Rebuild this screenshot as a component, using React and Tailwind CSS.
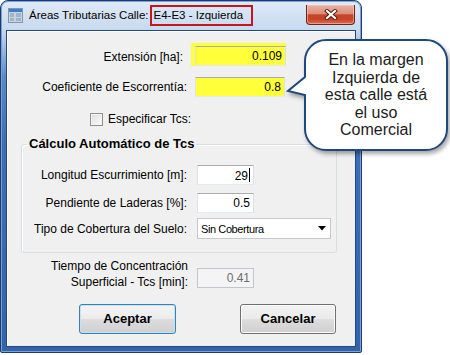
const field =
  'border border-[#abadb3] border-l-[#e2e3ea] border-r-[#dbdfe6] border-b-[#e3e9ef] bg-white h-[20px] text-right pr-[3px] text-[12px] leading-[18px]';

function TitleIcon() {
  return (
    <svg width="15" height="15" viewBox="0 0 15 15" className="shrink-0">
      <rect x="0.5" y="0.5" width="14" height="14" fill="#c9d3df" stroke="#8597ad" />
      <rect x="1" y="1" width="13" height="3" fill="#3d7fc7" />
      <rect x="2" y="5" width="4" height="4" fill="#9fb5cc" />
      <rect x="8" y="5" width="5" height="4" fill="#9fb5cc" />
      <rect x="2" y="10" width="4" height="3" fill="#9fb5cc" />
      <rect x="8" y="10" width="5" height="3" fill="#9fb5cc" />
    </svg>
  );
}

function CloseButton() {
  return (
    <div className="ml-auto mr-[6px] -mt-[1px] flex h-[20px] w-[49px] items-center justify-center rounded-b-[4px] border border-t-0 border-[#6a2418] bg-[linear-gradient(to_bottom,#eab1a2_0%,#dc8f7b_45%,#c7452c_52%,#c54329_75%,#dc6f4b_100%)] shadow-[inset_0_0_0_1px_rgba(255,210,200,0.5)]">
      <svg width="14" height="11" viewBox="0 0 14 11">
        <path d="M3 2 L11 9 M11 2 L3 9" stroke="#4a1a10" strokeWidth="4" strokeLinecap="square" />
        <path d="M3 2 L11 9 M11 2 L3 9" stroke="#ffffff" strokeWidth="2.2" strokeLinecap="square" />
      </svg>
    </div>
  );
}

function Callout() {
  return (
    <>
      <svg
        width="166"
        height="120"
        viewBox="0 0 166 120"
        className="absolute left-[286px] top-[38px] drop-shadow-[2px_3px_2px_rgba(0,0,0,0.35)]"
      >
        <path
          d="M40 2 H140 A21 21 0 0 1 161 23 V91 A21 21 0 0 1 140 112 H40 A21 21 0 0 1 19 91 V57 L2 53 L19 39 V23 A21 21 0 0 1 40 2 Z"
          fill="#ffffff"
          stroke="#1f497d"
          strokeWidth="2"
        />
      </svg>
      <div className="absolute left-[305px] top-[40px] flex h-[110px] w-[142px] flex-col items-center justify-center text-center text-[16px] leading-[17.5px] text-[#1c1c1c]">
        <span>En la margen</span>
        <span>Izquierda de</span>
        <span>esta calle está</span>
        <span>el uso</span>
        <span>Comercial</span>
      </div>
    </>
  );
}

export default function App() {
  return (
    <div
      className="relative h-[355px] w-[450px] overflow-hidden bg-white text-black"
      style={{ fontFamily: '"Liberation Sans", Arial, sans-serif' }}
    >
      <div className="flex h-[353px] w-[362px] flex-col rounded-t-[8px] rounded-b-[2px] border border-[#1d3a6a] bg-[linear-gradient(to_bottom,#dfeaf7_0px,#c8daef_28px,#a9c4e6_42px,#5b8aca_75px,#3e6eb5_140px,#3363aa_100%)] shadow-[inset_0_0_0_1px_#7aa2d8]">
        <div className="flex h-[29px] shrink-0 items-center">
          <div className="ml-[7px]">
            <TitleIcon />
          </div>
          <div className="ml-[6px] whitespace-nowrap text-[11.5px] text-black">
            Áreas Tributarias Calle:
            <span className="ml-[1px] inline-block border-2 border-[#c4161c] pl-[2px] pr-[8px] leading-[17px]">
              E4-E3 - Izquierda
            </span>
          </div>
          <CloseButton />
        </div>

        <div className="mx-[5px] mb-[5px] flex-1 border border-[#24467c] bg-[#f0f0f0] pl-[1px] shadow-[inset_1px_1px_0_#ffffff] text-[12px]">
          {/* Extensión */}
          <div className="mt-[12px] flex items-end">
            <div className="w-[175px] text-right leading-[18px]">Extensión [ha]:</div>
            <div className="ml-[8px] h-[23px] w-[95px] bg-[#ffff3a] pl-[4px] pt-[3px]">
              <div className={field + ' !bg-[#ffff3a] w-full'}>0.109</div>
            </div>
          </div>

          {/* Coeficiente */}
          <div className="mt-[11px] flex items-center">
            <div className="w-[179px] text-right leading-[16px]">Coeficiente de Escorrentía:</div>
            <div className={field + ' !bg-[#ffff3a] ml-[8px] w-[90px]'}>0.8</div>
          </div>

          {/* Especificar Tcs */}
          <div className="mt-[15px] flex items-center">
            <div className="ml-[82px] h-[13px] w-[13px] border border-[#8e8f8f] bg-[linear-gradient(135deg,#dcdcdc,#fdfdfd)] shadow-[inset_0_0_0_1px_#f4f4f4]" />
            <span className="ml-[5px] leading-[14px]">Especificar Tcs:</span>
          </div>

          {/* Cálculo automático */}
          <fieldset className="ml-[13px] mt-[10px] w-[316px] rounded-[3px] border border-[#d5dfe5] pb-[13px] shadow-[inset_1px_1px_0_#ffffff]">
            <legend className="ml-[5px] px-[2px] text-[13px] font-bold leading-[16px]">
              Cálculo Automático de Tcs
            </legend>
            <div className="mt-[13px] flex items-center">
              <div className="w-[165px] text-right leading-[16px]">Longitud Escurrimiento [m]:</div>
              <div className={field + ' ml-[10px] w-[57px]'}>
                29<span className="ml-[1px] inline-block h-[14px] w-[1px] translate-y-[2px] bg-black" />
              </div>
            </div>
            <div className="mt-[8px] flex items-center">
              <div className="w-[165px] text-right leading-[16px]">Pendiente de Laderas [%]:</div>
              <div className={field + ' ml-[10px] w-[57px]'}>0.5</div>
            </div>
            <div className="mt-[5px] flex items-center">
              <div className="w-[165px] text-right leading-[16px]">Tipo de Cobertura del Suelo:</div>
              <div className="ml-[10px] flex h-[21px] w-[134px] items-center border border-[#c5c9cf] bg-white pl-[3px] pr-[4px]">
                <span className="text-[11px] tracking-[-0.4px] leading-[14px]">Sin Cobertura</span>
                <svg width="8" height="5" viewBox="0 0 8 5" className="ml-auto">
                  <path d="M0 0 H8 L4 4.5 Z" fill="#000000" />
                </svg>
              </div>
            </div>
          </fieldset>

          {/* Tiempo de concentración */}
          <div className="mt-[5px] flex items-start">
            <div className="w-[180px] text-right leading-[16px]">
              Tiempo de Concentración
              <br />
              Superficial - Tcs [min]:
            </div>
            <div className="ml-[9px] mt-[10px] h-[20px] w-[57px] border border-[#c2c6ca] bg-[#f4f4f4] pr-[3px] text-right leading-[18px] text-[#6d6d6d]">
              0.41
            </div>
          </div>

          {/* Botones */}
          <div className="mt-[14px] flex">
            <button className="ml-[71px] h-[30px] w-[97px] rounded-[3px] border border-[#3c7fb1] bg-[linear-gradient(to_bottom,#f4f4f4_0%,#ececec_48%,#dcdcdc_52%,#d0d0d0_100%)] text-[13px] font-bold shadow-[inset_0_0_0_1px_#bfe3f7]">
              Aceptar
            </button>
            <button className="ml-[64px] h-[30px] w-[96px] rounded-[3px] border border-[#707070] bg-[linear-gradient(to_bottom,#f2f2f2_0%,#ebebeb_48%,#dddddd_52%,#cfcfcf_100%)] text-[13px] font-bold shadow-[inset_0_0_0_1px_#fbfbfb]">
              Cancelar
            </button>
          </div>
        </div>
      </div>

      <Callout />
    </div>
  );
}
